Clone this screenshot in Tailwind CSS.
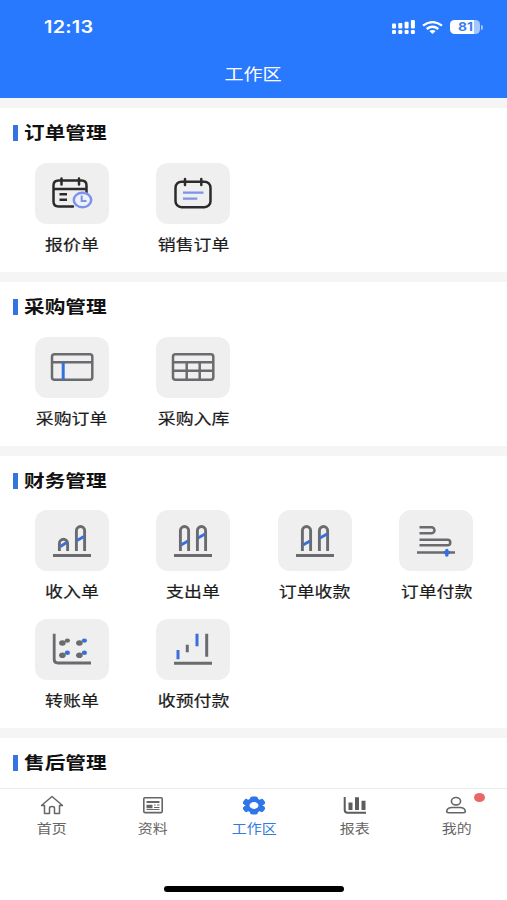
<!DOCTYPE html>
<html lang="zh-CN">
<head>
<meta charset="utf-8">
<title>工作区</title>
<script src="https://cdn.jsdelivr.net/npm/@tailwindcss/browser@4"></script>
</head>
<body class="w-[507px] h-[900px] overflow-hidden flex flex-col bg-[#f5f5f5] font-['Noto_Sans_CJK_SC',sans-serif] text-[#1c1c1c]">
<header class="h-[98px] shrink-0 bg-[#2979ff] text-white flex flex-col">
  <div class="h-[54px] flex items-center justify-between pl-[44px] pr-[24px]">
    <span class="font-['Inter',sans-serif] font-semibold text-[17px] leading-[20px] origin-left scale-x-[1.17] tracking-[0.2px]">12:13</span>
    <div class="flex items-center gap-[7px]">
      <svg class="w-[23px] h-[14px]" viewBox="0 0 23 14" fill="#fff"><rect x="0" y="3.5" width="4" height="5" rx="1"/><rect x="6.3" y="3" width="4" height="5.500" rx="1"/><rect x="12.600" y="1.700" width="4" height="6.800" rx="1"/><rect x="18.900" y="0" width="4" height="8.500" rx="1"/><rect x="0" y="10" width="4" height="4" rx="1.200"/><rect x="6.300" y="10" width="4" height="4" rx="1.200"/><rect x="12.600" y="10" width="4" height="4" rx="1.200"/><rect x="18.900" y="10" width="4" height="4" rx="1.200"/></svg>
      <svg class="w-[21px] h-[13px]" viewBox="0 0 21 13" fill="none" stroke="#fff" stroke-width="2.300"><path d="M1 4.600Q10.500-2.400 20 4.600"/><path d="M4.700 8Q10.500 3.600 16.300 8"/><path d="M7.300 10.100Q10.500 7.800 13.700 10.100L10.500 12.900Z" fill="#fff" stroke="none"/></svg>
      <div class="flex items-center gap-px">
        <div class="w-[30px] h-[14px] rounded-[4.500px] bg-linear-to-r from-white from-80% to-[#a5c6ff] to-80% flex items-center justify-center"><span class="font-['Inter',sans-serif] font-bold text-[12px] leading-[14px] text-[#3a7df0] scale-x-[1.150]">81</span></div>
        <div class="w-[2px] h-[5px] rounded-r-full bg-[#a5c6ff]"></div>
      </div>
    </div>
  </div>
  <div class="h-[38px] flex items-center justify-center"><h1 class="text-[16px] leading-[20px] font-normal scale-x-[1.190]">工作区</h1></div>
</header>

<main class="flex-1 min-h-0 overflow-hidden pt-[10px] flex flex-col gap-[10px]">
  <section class="bg-white shrink-0 h-[164px]">
    <div class="h-[55px] flex items-start pt-[14px] pl-[13px] gap-[6px]"><i class="w-[5px] h-[16px] mt-[3px] bg-[#3474e0]"></i><h2 class="text-[17.5px] leading-[20px] font-bold text-[#111] origin-left scale-x-[1.180]">订单管理</h2></div>
    <div class="grid grid-cols-4 pl-[11px] pr-[10px]">
      <div class="h-[109px] flex flex-col items-center">
        <svg class="w-[74px] h-[61px] rounded-[12px] bg-[#efefef]" viewBox="0 0 74 61" fill="none" stroke="#2b2b2b" stroke-width="2.500"><path d="M38 43.500H23.500Q18.500 43.500 18.500 38.500V22.500Q18.500 17.500 23.500 17.500H46.500Q51.500 17.500 51.500 22.500V30M18.500 26H51.500M26.500 15.500V21.500M44 15.500V21.500" stroke-linecap="round"/><path d="M24.500 31.300H32M24.500 36.700H32"/><ellipse cx="47.500" cy="37" rx="8.700" ry="7.300" fill="#eef0fb" stroke="#7b93e8"/><path d="M46.700 32.500V38H51.500" stroke="#7b93e8" stroke-width="2"/></svg>
        <span class="mt-[9px] text-[15.300px] leading-[20px] scale-x-[1.170] whitespace-nowrap [-webkit-text-stroke:0.2px]">报价单</span>
      </div>
      <div class="h-[109px] flex flex-col items-center">
        <svg class="w-[74px] h-[61px] rounded-[12px] bg-[#efefef]" viewBox="0 0 74 61" fill="none" stroke="#2b2b2b" stroke-width="2.500"><rect x="19.500" y="18.700" width="35" height="25.500" rx="6"/><path d="M29 16V22M45.300 16V22" stroke-linecap="round"/><path d="M27 29.700H47.500M27 35.700H41.300" stroke="#7b93e8" stroke-width="2.200"/></svg>
        <span class="mt-[9px] text-[15.300px] leading-[20px] scale-x-[1.170] whitespace-nowrap [-webkit-text-stroke:0.2px]">销售订单</span>
      </div>
    </div>
  </section>

  <section class="bg-white shrink-0 h-[164px]">
    <div class="h-[55px] flex items-start pt-[14px] pl-[13px] gap-[6px]"><i class="w-[5px] h-[16px] mt-[3px] bg-[#3474e0]"></i><h2 class="text-[17.5px] leading-[20px] font-bold text-[#111] origin-left scale-x-[1.180]">采购管理</h2></div>
    <div class="grid grid-cols-4 pl-[11px] pr-[10px]">
      <div class="h-[109px] flex flex-col items-center">
        <svg class="w-[74px] h-[61px] rounded-[12px] bg-[#efefef]" viewBox="0 0 74 61" fill="none" stroke="#6a6b6e" stroke-width="2.500"><rect x="17" y="17.300" width="40.300" height="25.500" rx="2.500"/><path d="M17 25.300H57"/><path d="M28.200 25.300V43" stroke="#3a6fd8" stroke-width="3"/></svg>
        <span class="mt-[9px] text-[15.300px] leading-[20px] scale-x-[1.170] whitespace-nowrap [-webkit-text-stroke:0.2px]">采购订单</span>
      </div>
      <div class="h-[109px] flex flex-col items-center">
        <svg class="w-[74px] h-[61px] rounded-[12px] bg-[#efefef]" viewBox="0 0 74 61" fill="none" stroke="#6a6b6e" stroke-width="2.500"><rect x="17" y="17.300" width="40.300" height="25.500" rx="2.500"/><path d="M17 25.300H57M17 33.700H57M30.700 25.300V43M43.700 25.300V43"/></svg>
        <span class="mt-[9px] text-[15.300px] leading-[20px] scale-x-[1.170] whitespace-nowrap [-webkit-text-stroke:0.2px]">采购入库</span>
      </div>
    </div>
  </section>

  <section class="bg-white shrink-0 h-[272px]">
    <div class="h-[54px] flex items-start pt-[14px] pl-[13px] gap-[6px]"><i class="w-[5px] h-[16px] mt-[3px] bg-[#3474e0]"></i><h2 class="text-[17.5px] leading-[20px] font-bold text-[#111] origin-left scale-x-[1.180]">财务管理</h2></div>
    <div class="grid grid-cols-4 pl-[11px] pr-[10px]">
      <div class="h-[109px] flex flex-col items-center">
        <svg class="w-[74px] h-[61px] rounded-[12px] bg-[#efefef]" viewBox="0 0 74 61" fill="none" stroke="#6a6b6e" stroke-width="2.900"><path d="M24.400 41V33.400a4.100 4.100 0 0 1 8.200 0V41M41.400 41V20.600a4.100 4.100 0 0 1 8.200 0V41M18 45.500H56"/><path d="M25.500 36.500L31.500 32.500M42 30.500L49 26.500" stroke="#3a6fd8"/></svg>
        <span class="mt-[9px] text-[15.300px] leading-[20px] scale-x-[1.170] whitespace-nowrap [-webkit-text-stroke:0.2px]">收入单</span>
      </div>
      <div class="h-[109px] flex flex-col items-center">
        <svg class="w-[74px] h-[61px] rounded-[12px] bg-[#efefef]" viewBox="0 0 74 61" fill="none" stroke="#6a6b6e" stroke-width="2.900"><path d="M24.400 41V20.600a4.100 4.100 0 0 1 8.200 0V41M41.400 41V20.600a4.100 4.100 0 0 1 8.200 0V41M18 45.500H56"/><path d="M25 35L32 31M42 28L49 24" stroke="#3a6fd8"/></svg>
        <span class="mt-[9px] text-[15.300px] leading-[20px] scale-x-[1.170] whitespace-nowrap [-webkit-text-stroke:0.2px]">支出单</span>
      </div>
      <div class="h-[109px] flex flex-col items-center">
        <svg class="w-[74px] h-[61px] rounded-[12px] bg-[#efefef]" viewBox="0 0 74 61" fill="none" stroke="#6a6b6e" stroke-width="2.900"><path d="M24.400 41V20.600a4.100 4.100 0 0 1 8.200 0V41M41.400 41V20.600a4.100 4.100 0 0 1 8.200 0V41M18 45.500H56"/><path d="M25 35L32 31M42 28L49 24" stroke="#3a6fd8"/></svg>
        <span class="mt-[9px] text-[15.300px] leading-[20px] scale-x-[1.170] whitespace-nowrap [-webkit-text-stroke:0.2px]">订单收款</span>
      </div>
      <div class="h-[109px] flex flex-col items-center">
        <svg class="w-[74px] h-[61px] rounded-[12px] bg-[#efefef]" viewBox="0 0 74 61" fill="none" stroke="#6a6b6e" stroke-width="2.500"><path d="M20.500 17.200H32.500a3 3 0 0 1 0 6H20.500M20.500 29.700H48.500a2.800 2.800 0 0 1 0 5.600H20.500M18 42.600H56"/><path d="M47.800 40.500V45" stroke="#3a6fd8" stroke-width="3.500" stroke-linecap="round"/><path d="M44.800 42.600H51" stroke="#3a6fd8" stroke-width="3"/></svg>
        <span class="mt-[9px] text-[15.300px] leading-[20px] scale-x-[1.170] whitespace-nowrap [-webkit-text-stroke:0.2px]">订单付款</span>
      </div>
      <div class="h-[109px] flex flex-col items-center">
        <svg class="w-[74px] h-[61px] rounded-[12px] bg-[#efefef]" viewBox="0 0 74 61" fill="none" stroke="#6a6b6e" stroke-width="2.800"><path d="M19.200 14.700V40.500Q19.200 44 23 44H56"/><g stroke="none" fill="#6a6b6e"><ellipse cx="27.400" cy="24" rx="3.300" ry="2.800"/><ellipse cx="32.400" cy="21.600" rx="2.600" ry="2.200"/><ellipse cx="44.400" cy="24" rx="3.300" ry="2.800"/><ellipse cx="27.400" cy="36.200" rx="3.300" ry="2.800"/><ellipse cx="44.400" cy="36.200" rx="3.300" ry="2.800"/></g><g stroke="none" fill="#3a6fd8"><ellipse cx="49.400" cy="21.600" rx="2.600" ry="2.200"/><ellipse cx="32.400" cy="33.800" rx="2.600" ry="2.200"/><ellipse cx="49.400" cy="33.800" rx="2.600" ry="2.200"/></g></svg>
        <span class="mt-[9px] text-[15.300px] leading-[20px] scale-x-[1.170] whitespace-nowrap [-webkit-text-stroke:0.2px]">转账单</span>
      </div>
      <div class="h-[109px] flex flex-col items-center">
        <svg class="w-[74px] h-[61px] rounded-[12px] bg-[#efefef]" viewBox="0 0 74 61" fill="none" stroke="#6a6b6e" stroke-width="3"><path d="M31.300 25.700V33.300M50.700 14.700V37.700M18 44.300H56"/><path d="M22 31V40.300M41 14.700V27.300" stroke="#3a6fd8"/></svg>
        <span class="mt-[9px] text-[15.300px] leading-[20px] scale-x-[1.170] whitespace-nowrap [-webkit-text-stroke:0.2px]">收预付款</span>
      </div>
    </div>
  </section>

  <section class="bg-white shrink-0 h-[55px]">
    <div class="flex items-start pt-[14px] pl-[13px] gap-[6px]"><i class="w-[5px] h-[16px] mt-[3px] bg-[#3474e0]"></i><h2 class="text-[17.5px] leading-[20px] font-bold text-[#111] origin-left scale-x-[1.180]">售后管理</h2></div>
  </section>
</main>

<footer class="h-[112px] shrink-0 bg-white border-t border-[#ececec] flex flex-col items-center text-[#666]">
  <nav class="w-full grid grid-cols-5 h-[97px] pt-[4px] pl-px text-[12.800px] leading-[18px]">
    <div class="flex flex-col items-center gap-[2px]">
      <svg class="w-[26px] h-[24px]" viewBox="0 0 26 24" fill="none" stroke="#666" stroke-width="1.500" stroke-linejoin="round"><path d="M13 3.500L2.500 12.500H5.500V20.500H10.500V15Q10.500 13.500 13 13.500T15.500 15V20.500H20.500V12.500H23.500Z"/></svg>
      <span class="scale-x-[1.170]">首页</span>
    </div>
    <div class="flex flex-col items-center gap-[2px]">
      <svg class="w-[26px] h-[24px]" viewBox="0 0 26 24" fill="none" stroke="#666" stroke-width="1.600"><rect x="3.800" y="4.800" width="18.400" height="14.800" rx="1"/><path d="M6.500 9H19.500" stroke-width="2"/><path d="M6.500 13.500H12.500" stroke-width="3.500"/><path d="M14 12H15.500M17 12H19.500M14 14.500H19.500M6.500 16.500H19.500" stroke-width="1"/></svg>
      <span class="scale-x-[1.170]">资料</span>
    </div>
    <div class="flex flex-col items-center gap-[2px] text-[#3478e5]">
      <svg class="w-[26px] h-[24px]" viewBox="0 0 26 24" fill="none" stroke="#2f76e8"><ellipse cx="13" cy="12.500" rx="6.600" ry="5.600" stroke-width="4.200"/><g stroke-width="5" stroke-linejoin="round"><path d="M11.300 5.800H14.700M11.300 19.200H14.700M4.300 9.700L5.300 8.300M21.700 9.700L20.700 8.300M4.300 15.300L5.300 16.700M21.700 15.300L20.700 16.700" stroke-width="4.600" stroke-linecap="round"/></g></svg>
      <span class="scale-x-[1.170]">工作区</span>
    </div>
    <div class="flex flex-col items-center gap-[2px]">
      <svg class="w-[26px] h-[24px]" viewBox="0 0 26 24" fill="none" stroke="#5c5c5c"><path d="M2.700 4V17Q2.700 19.700 5.500 19.700H24" stroke-width="2"/><path d="M8.500 9.500V17M15 4.200V17M21.500 7.700V17" stroke-width="4"/></svg>
      <span class="scale-x-[1.170]">报表</span>
    </div>
    <div class="relative flex flex-col items-center gap-[2px]">
      <svg class="w-[26px] h-[24px]" viewBox="0 0 26 24" fill="none" stroke="#666" stroke-width="1.600"><ellipse cx="13" cy="8.200" rx="4.600" ry="3.700"/><path d="M5.500 19.700Q3.700 19.700 3.700 18Q4.500 14.500 9 14.500H17Q21.500 14.500 22.300 18Q22.300 19.700 20.500 19.700Z"/></svg>
      <span class="scale-x-[1.170]">我的</span>
      <b class="absolute left-[68px] top-0 w-[11px] h-[9px] rounded-[50%] bg-[#e96767]"></b>
    </div>
  </nav>
  <div class="w-[180px] h-[6px] rounded-full bg-black"></div>
</footer>
</body>
</html>
